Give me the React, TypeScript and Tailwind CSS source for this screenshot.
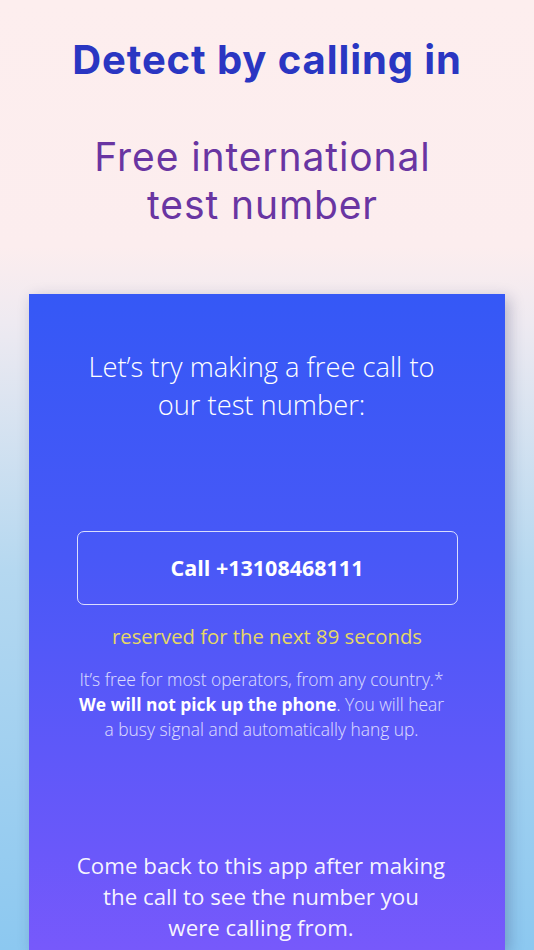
import React from "react";

const sans = { fontFamily: '"Open Sans", "Noto Sans", sans-serif' };

export default function App() {
    return (
        <div
            className="w-[534px] h-[950px] overflow-hidden flex flex-col items-center bg-[linear-gradient(180deg,#fdeeee_0%,#fcedee_26%,#eeeaf1_34%,#b5d8f0_60%,#8cc8f0_100%)]"
        >
            {/* Header */}
            <div className="flex flex-col items-center text-center pt-[37px]" style={{ fontFamily: '"Inter", "Lato", sans-serif' }}>
                <h1 className="text-[40px] leading-[46px] font-bold tracking-[0.9px] text-[#2a36c2] whitespace-nowrap">
                    Detect by calling in
                </h1>
                <h2 className="mt-[50px] pr-[9px] text-[39px] leading-[48px] font-normal tracking-[0.9px] text-[#6935a2]">
                    Free international
                    <br />
                    test number
                </h2>
            </div>

            {/* Card */}
            <div
                className="mt-[65px] w-[476px] flex-1 flex flex-col items-center text-center text-white pt-[54px] shadow-[4px_4px_14px_rgba(40,40,90,0.28)] bg-[linear-gradient(180deg,#3558f6_0%,#4858f7_40%,#6a58fa_85%,#7759fb_100%)]"
                style={sans}
            >
                <p className="pr-[11px] text-[27.3px] leading-[38px] font-light">
                    Let’s try making a free call to
                    <br />
                    our test number:
                </p>

                <button className="mt-[107px] w-[381px] h-[74px] rounded-[7px] border-[1.5px] border-white/80 text-[21.5px] font-bold">
                    Call +13108468111
                </button>

                <p className="mt-[19px] text-[20.3px] leading-[24px] text-[#e6d865]">
                    reserved for the next 89 seconds
                </p>

                <p className="mt-[19px] pr-[11px] text-[17.4px] leading-[25px] font-light text-white/80 whitespace-nowrap">
                    It’s free for most operators, from any country.*
                    <br />
                    <span className="font-bold text-white">We will not pick up the phone</span>. You will hear
                    <br />
                    a busy signal and automatically hang up.
                </p>

                <p className="mt-[108px] pr-[12px] text-[22.3px] leading-[31px] text-white/95 whitespace-nowrap">
                    Come back to this app after making
                    <br />
                    the call to see the number you
                    <br />
                    were calling from.
                </p>
            </div>
        </div>
    );
}
